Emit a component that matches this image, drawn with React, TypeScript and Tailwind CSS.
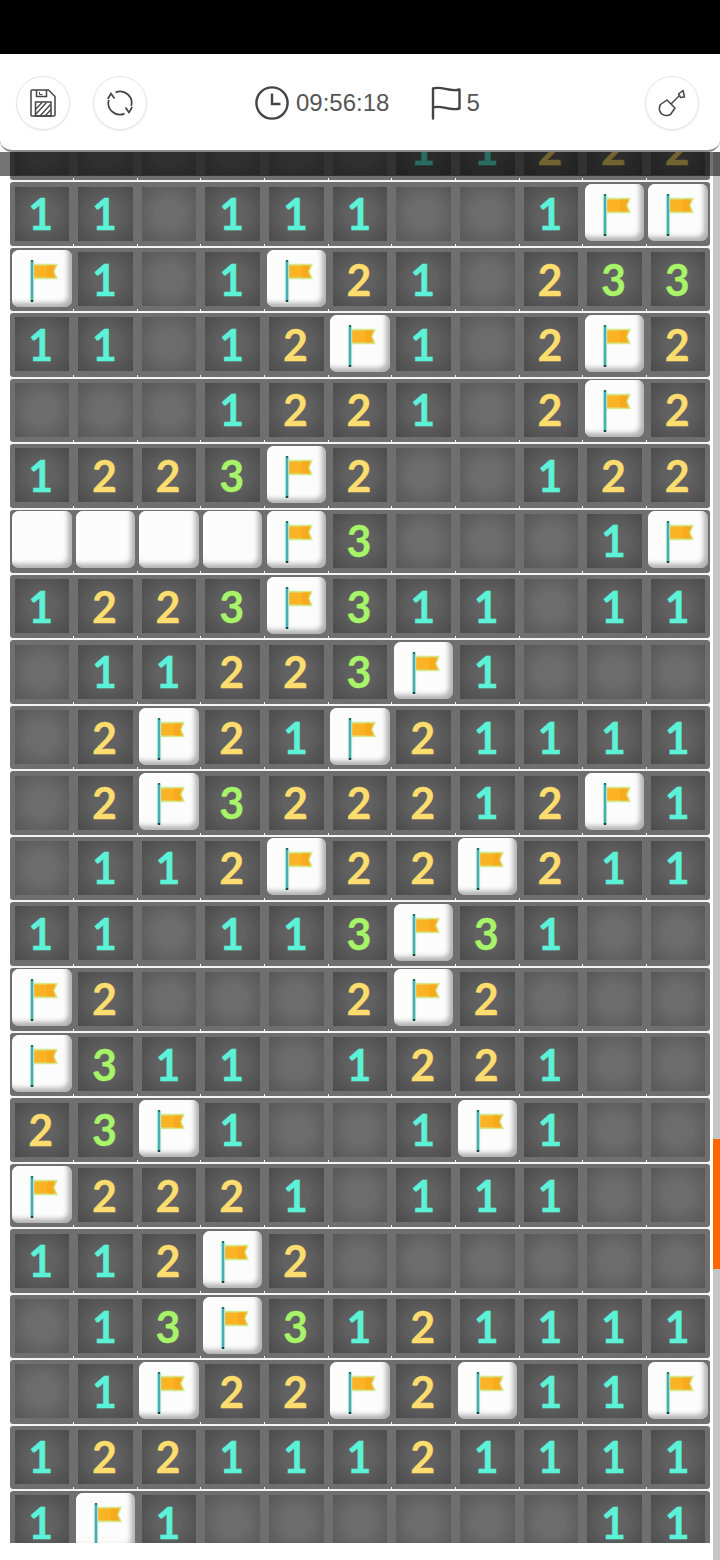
const ROWS: string[] = [
  "......11222",
  "11.111..1FF",
  "F1.1F21.233",
  "11.12F1.2F2",
  "...1221.2F2",
  "1223F2..122",
  "WWWWF3...1F",
  "1223F311.11",
  ".11223F1...",
  ".2F21F21111",
  ".2F322212F1",
  ".112F22F211",
  "11.113F31..",
  "F2...2F2...",
  "F311.1221..",
  "23F1..1F1..",
  "F2221.111..",
  "112F2......",
  ".13F3121111",
  ".1F22F2F11F",
  "12211121111",
  "1F1......11",
];

const NUM_COLOR: Record<string, string> = {
  "1": "text-[#5cf2d8]",
  "2": "text-[#fcdd6e]",
  "3": "text-[#a8f468]",
};

function FlagGlyph() {
  return (
    <svg viewBox="0 0 59 57" className="block h-[57px] w-[59px]">
      <path d="M21 14.5H45L42 21.5L45 28.5H21Z" fill="#d3e98c" stroke="#d3e98c" strokeWidth="1.4" strokeLinejoin="round" />
      <path d="M21 15.5H43.5L41 21.5L43.5 27.5H21Z" fill="#fbb324" />
      <path d="M35 15.5H43.5L41 21.5L43.5 27.5H35Z" fill="#f8a91e" />
      <rect x="17.8" y="10" width="4.4" height="42" fill="#c9f0cf" />
      <rect x="18.8" y="11" width="2.4" height="40" fill="#45adb9" />
      <rect x="19" y="10" width="2" height="2" fill="#2d6a72" />
      <rect x="18.8" y="50" width="2.4" height="2" fill="#1f3f44" />
    </svg>
  );
}

function Cell({ v, last, first }: { v: string; last: boolean; first: boolean }) {
  const tile = v === "F" || v === "W";
  return (
    <div
      className={
        "relative flex-1 h-full flex items-center justify-center bg-[#6f6f6f] " +
        (first ? "rounded-l-[3px] " : "") +
        (last ? "rounded-r-[3px] " : "")
      }
    >
      {tile ? (
        <div className="mt-[-3px] h-[57px] w-[59.5px] rounded-[7px] bg-[#fcfcfc] shadow-[inset_-4px_-4px_5px_rgba(0,0,0,0.3),inset_2px_2px_2px_rgba(255,255,255,0.9)]">
          {v === "F" && <FlagGlyph />}
        </div>
      ) : (
        <div
          className={
            "mt-[-1px] flex h-[54px] w-[54.5px] items-center justify-center pr-[2px] font-['Lato',sans-serif] text-[43px] font-bold leading-none [-webkit-text-stroke:0.3px_currentColor] " +
            (v === "."
              ? "bg-[radial-gradient(circle,#6c6c6c_35%,#575757_100%)] "
              : "bg-[radial-gradient(circle,#626262_30%,#4b4b4b_100%)] ") +
            (NUM_COLOR[v] ?? "")
          }
        >
          {v !== "." && v}
        </div>
      )}
    </div>
  );
}

function Row({ cells }: { cells: string }) {
  return (
    <div className="flex h-[65.44px] flex-col">
      <div className="flex flex-1">
        {cells.split("").map((v, i) => (
          <Cell key={i} v={v} first={i === 0} last={i === 10} />
        ))}
      </div>
      <div className="relative flex h-[2px] bg-[#f4f4f4]">
        {cells.split("").map((_, i) => (
          <div key={i} className="relative flex-1">
            {i > 0 && <div className="absolute left-[-0.5px] top-[-2px] h-[6px] w-[1px] bg-[#f4f4f4]" />}
          </div>
        ))}
      </div>
    </div>
  );
}

function RoundButton({ children }: { children: React.ReactNode }) {
  return (
    <div className="flex h-[54px] w-[54px] items-center justify-center rounded-full border border-[#e6e6e6] bg-white shadow-[0_1px_2px_rgba(0,0,0,0.08)]">
      {children}
    </div>
  );
}

function SaveIcon() {
  return (
    <svg viewBox="0 0 26 28" className="h-[28px] w-[26px]" fill="none" stroke="#444" strokeWidth="1.5">
      <path d="M1 2a1 1 0 0 1 1-1h16.5L25 7.5V26a1 1 0 0 1-1 1H2a1 1 0 0 1-1-1Z" strokeLinejoin="round" />
      <path d="M6.5 1v6.5h10V1" />
      <path d="M9.5 3v2.5h3" strokeWidth="1" />
      <rect x="5.5" y="13" width="15.5" height="14" />
      <path d="M6 20l6-6.5M6 25l10.5-11.5M10 27l10.5-11.5M15 27l6-6.5" strokeWidth="1.3" />
    </svg>
  );
}

function SyncIcon() {
  return (
    <svg viewBox="0 0 26 26" className="h-[26px] w-[26px]" fill="none" stroke="#444" strokeWidth="1.7">
      <path d="M8.5 2.4A11.5 11.5 0 0 1 24.2 16" />
      <path d="M17.5 23.6A11.5 11.5 0 0 1 1.8 10" />
      <path d="M0.8 9L4 3.5L7.5 8.5" />
      <path d="M25.2 17L22 22.5L18.5 17.5" />
    </svg>
  );
}

function ClockIcon() {
  return (
    <svg viewBox="0 0 34 34" className="h-[34px] w-[34px]" fill="none" stroke="#444" strokeWidth="2.4">
      <circle cx="17" cy="17" r="15.6" />
      <path d="M17 7.5V18H25.5" />
    </svg>
  );
}

function FlagIcon() {
  return (
    <svg viewBox="0 0 30 34" className="h-[34px] w-[30px]" fill="none" stroke="#444" strokeWidth="2.4" strokeLinecap="round" strokeLinejoin="round">
      <path d="M2 32.5V2.5C11 -0.5 18 6.5 28.5 3.5V22.5C18 25.5 11 18.5 2 21.5" />
    </svg>
  );
}

function ShovelIcon() {
  return (
    <svg viewBox="0 0 28 28" className="h-[28px] w-[28px]" fill="none" stroke="#444" strokeWidth="1.5" strokeLinejoin="round">
      <path d="M2.5 15.5L9 11L17 19L12.5 25.5C9 27.5 4.5 26.5 2.5 23.5C1 21 1 18 2.5 15.5Z" />
      <path d="M13 15L22 6" />
      <path d="M20.5 5L25 1.5L26.5 8L22.5 8.5Z" />
    </svg>
  );
}

export default function App() {
  return (
    <div className="relative flex h-[1560px] w-[720px] flex-col overflow-hidden bg-white font-['Liberation_Sans',sans-serif]">
      <div className="h-[54px] shrink-0 bg-black" />
      <header className="relative z-20 flex h-[98px] shrink-0 items-center rounded-b-[12px] border-b-2 border-[#8c8c8c] bg-white pl-[16px] pr-[21px] pt-[1px] text-[24px] text-[#555]">
        <RoundButton>
          <SaveIcon />
        </RoundButton>
        <div className="ml-[23px]">
          <RoundButton>
            <SyncIcon />
          </RoundButton>
        </div>
        <div className="ml-[108px] flex items-center gap-[7px]">
          <ClockIcon />
          <span>09:56:18</span>
        </div>
        <div className="ml-[42px] flex items-center gap-[5px]">
          <FlagIcon />
          <span>5</span>
        </div>
        <div className="ml-auto">
          <RoundButton>
            <ShovelIcon />
          </RoundButton>
        </div>
      </header>
      <main className="relative flex min-h-0 flex-1">
        <div className="ml-[10px] h-[1391px] w-[700px] overflow-hidden">
          <div className="mt-[-35.1px]">
            {ROWS.map((r, i) => (
              <Row key={i} cells={r} />
            ))}
          </div>
        </div>
        <div className="ml-[3px] w-[7px] bg-[#c6c6c6] pt-[987px]">
          <div className="h-[130px] bg-[#ff6600]" />
        </div>
        <div className="absolute inset-x-0 top-0 z-10 h-[23.5px] bg-black/55" />
      </main>
    </div>
  );
}
